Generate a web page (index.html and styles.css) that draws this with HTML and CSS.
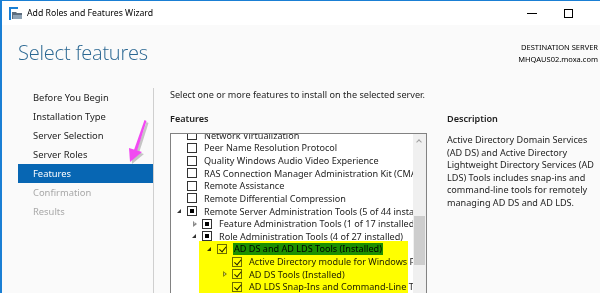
FILE: index.html
```html
<!DOCTYPE html>
<html>
<head>
<meta charset="utf-8">
<link rel="stylesheet" href="styles.css">
</head>
<body>
<div class="window">
  <div class="titlebar">
    <svg class="app-icon" width="14" height="13" viewBox="0 0 14 13">
      <rect x="0" y="0" width="2" height="13" fill="#1a7fd4"/>
      <rect x="0" y="0" width="9" height="2" fill="#1a7fd4"/>
      <path d="M3 5 h4 l1 1 h5 v6 h-10 z" fill="#5d6d7e"/>
      <path d="M4 8 h9 v4 h-9 z" fill="#8fa3b5"/>
    </svg>
    <span class="title">Add Roles and Features Wizard</span>
    <div class="controls">
      <span class="ctl"><span class="min-glyph"></span></span>
      <span class="ctl"><span class="max-glyph"></span></span>
    </div>
  </div>
  <div class="content">
    <div class="header">
      <h1 class="page-title">Select features</h1>
      <div class="dest">
        <div>DESTINATION SERVER</div>
        <div>MHQAUS02.moxa.com</div>
      </div>
    </div>
    <div class="panes">
      <nav class="nav">
        <div class="nav-item">Before You Begin</div>
        <div class="nav-item">Installation Type</div>
        <div class="nav-item">Server Selection</div>
        <div class="nav-item">Server Roles</div>
        <div class="nav-item active">Features</div>
        <div class="nav-item disabled">Confirmation</div>
        <div class="nav-item disabled">Results</div>
      </nav>
      <div class="main">
        <div class="intro">Select one or more features to install on the selected server.</div>
        <div class="cols">
          <div class="feat-col">
            <div class="label">Features</div>
            <div class="tree-box">
              <div class="tree">
                <div class="rows">
                  <div class="row l0"><span class="exp"></span><span class="cb"></span><span class="txt">Network Virtualization</span></div>
                  <div class="row l0"><span class="exp"></span><span class="cb"></span><span class="txt">Peer Name Resolution Protocol</span></div>
                  <div class="row l0"><span class="exp"></span><span class="cb"></span><span class="txt">Quality Windows Audio Video Experience</span></div>
                  <div class="row l0"><span class="exp"></span><span class="cb"></span><span class="txt">RAS Connection Manager Administration Kit (CMAK)</span></div>
                  <div class="row l0"><span class="exp"></span><span class="cb"></span><span class="txt">Remote Assistance</span></div>
                  <div class="row l0"><span class="exp"></span><span class="cb"></span><span class="txt">Remote Differential Compression</span></div>
                  <div class="row l0"><span class="exp open"></span><span class="cb partial"></span><span class="txt">Remote Server Administration Tools (5 of 44 installed)</span></div>
                  <div class="row l1"><span class="exp closed"></span><span class="cb partial"></span><span class="txt">Feature Administration Tools (1 of 17 installed)</span></div>
                  <div class="row l1"><span class="exp open"></span><span class="cb partial"></span><span class="txt">Role Administration Tools (4 of 27 installed)</span></div>
                  <div class="row l2"><span class="exp open"></span><span class="cb checked"></span><span class="txt selected">AD DS and AD LDS Tools (Installed)</span></div>
                  <div class="row l3"><span class="exp"></span><span class="cb checked"></span><span class="txt">Active Directory module for Windows PowerShell</span></div>
                  <div class="row l3"><span class="exp closed"></span><span class="cb checked"></span><span class="txt">AD DS Tools (Installed)</span></div>
                  <div class="row l3"><span class="exp"></span><span class="cb checked"></span><span class="txt">AD LDS Snap-Ins and Command-Line Tools</span></div>
                </div>
                <div class="marker"></div>
              </div>
              <div class="scrollbar">
                <div class="sb-up"></div>
                <div class="sb-thumb"></div>
              </div>
            </div>
          </div>
          <div class="desc-col">
            <div class="label">Description</div>
            <p class="desc">Active Directory Domain Services<br>(AD DS) and Active Directory<br>Lightweight Directory Services (AD<br>LDS) Tools includes snap-ins and<br>command-line tools for remotely<br>managing AD DS and AD LDS.</p>
          </div>
        </div>
      </div>
    </div>
  </div>
  <svg class="pink-arrow" width="30" height="50" viewBox="0 0 30 50">
    <g transform="translate(2,2)" fill="#9a9a9a" opacity="0.55">
      <path d="M18.5 3 L20.5 4 L11 34 L8 33 Z"/>
      <path d="M3 31 L16 35 L4 45 Z"/>
    </g>
    <g fill="#f24af2">
      <path d="M18.5 3 L20.5 4 L11 34 L8 33 Z"/>
      <path d="M3 31 L16 35 L4 45 Z"/>
    </g>
  </svg>
</div>
</body>
</html>
```

FILE: styles.css
```css
* { box-sizing: border-box; }
html, body { margin: 0; padding: 0; }
body {
  width: 600px;
  height: 293px;
  overflow: hidden;
  font-family: "Noto Sans", "Open Sans", sans-serif;
  font-size: 9.1px;
  color: #1e1e1e;
}
.window {
  position: relative;
  width: 600px;
  height: 293px;
  border-top: 1px solid #1a7fd4;
  border-left: 2px solid #1a7fd4;
  background: #fafafa;
  overflow: hidden;
  display: flex;
  flex-direction: column;
}
.titlebar {
  height: 24px;
  flex: none;
  background: #ffffff;
  display: flex;
  align-items: center;
}
.app-icon { margin-left: 7px; margin-right: 4px; margin-top: 1px; }
.title { font-size: 8.7px; color: #000; }
.controls { margin-left: auto; display: flex; margin-right: 14px; }
.ctl {
  width: 36px;
  height: 24px;
  display: flex;
  align-items: center;
  justify-content: center;
}
.min-glyph { width: 10px; height: 1px; background: #000; }
.max-glyph { width: 9px; height: 9px; border: 1px solid #000; }

.content { flex: 1; display: flex; flex-direction: column; min-height: 0; }
.header {
  height: 63px;
  flex: none;
  display: flex;
  justify-content: space-between;
  align-items: flex-start;
}
.page-title {
  margin: 15px 0 0 16px;
  font-family: "Open Sans", "Noto Sans", sans-serif;
  font-weight: 300;
  font-size: 20px;
  line-height: 26px;
  color: #2a6792;
  letter-spacing: -0.2px;
}
.dest {
  margin-top: 17px;
  margin-right: 2px;
  text-align: right;
  font-size: 7.5px;
  line-height: 11.5px;
  color: #000;
}
.panes { flex: 1; display: flex; min-height: 0; }
.nav {
  width: 152px;
  flex: none;
  padding-left: 16px;
  border-right: 1px solid #cfcfcf;
  font-size: 9.4px;
}
.nav-item {
  height: 19px;
  line-height: 19px;
  padding-left: 15px;
  white-space: nowrap;
}
.nav-item.active { background: #0766b3; color: #fff; }
.nav-item.disabled { color: #a8a8a8; }

.main { flex: 1; padding-left: 16px; display: flex; flex-direction: column; min-width: 0; }
.intro { height: 14px; line-height: 14px; white-space: nowrap; }
.cols { display: flex; gap: 20px; margin-top: 10px; flex: 1; min-height: 0; }
.label { font-weight: 600; height: 14px; line-height: 14px; }
.feat-col { width: 257px; flex: none; display: flex; flex-direction: column; }
.tree-box {
  margin-top: 7px;
  flex: 1;
  border: 1px solid #828282;
  border-bottom: none;
  background: #fff;
  display: flex;
  min-height: 0;
}
.tree { flex: 1; position: relative; overflow: hidden; min-width: 0; }
.rows { margin-top: -5px; }
.row {
  height: 12.64px;
  display: flex;
  align-items: center;
  white-space: nowrap;
  padding-left: 4px;
}
.row.l1 { padding-left: 19px; }
.row.l2 { padding-left: 34px; }
.row.l3 { padding-left: 49px; }
.exp { width: 12px; height: 12px; flex: none; position: relative; }
.exp.open::after {
  content: "";
  position: absolute;
  left: 2px; top: 4px;
  border-style: solid;
  border-width: 0 0 4px 4px;
  border-color: transparent transparent #333 transparent;
}
.exp.closed::after {
  content: "";
  position: absolute;
  left: 3px; top: 3px;
  width: 0; height: 0;
  border-style: solid;
  border-width: 3px 0 3px 4px;
  border-color: transparent transparent transparent #8a8a8a;
}
.exp.closed::before {
  content: "";
  position: absolute;
  left: 4px; top: 4.5px;
  width: 0; height: 0;
  border-style: solid;
  border-width: 1.5px 0 1.5px 1.8px;
  border-color: transparent transparent transparent #fff;
  z-index: 1;
}
.cb {
  width: 10px; height: 10px; flex: none;
  border: 1px solid #333;
  background: #fff;
  position: relative;
}
.cb.partial::after {
  content: "";
  position: absolute;
  left: 2px; top: 2px; width: 4px; height: 4px;
  background: #000;
}
.cb.checked { border-color: #6e6e6e; }
.cb.checked::after {
  content: "";
  position: absolute;
  left: 2.5px; top: 0px;
  width: 3px; height: 5.5px;
  border: solid #1e1e1e;
  border-width: 0 1.3px 1.3px 0;
  transform: rotate(40deg);
}
.txt { margin-left: 7px; }
.txt.selected { background: #1c8f1c; color: #000; padding: 0 1px; margin-left: 6px; line-height: 12px; }
.marker {
  position: absolute;
  left: 28px; top: 107px;
  width: 209px; height: 60px;
  background: #ffff00;
  mix-blend-mode: multiply;
}
.scrollbar { width: 13px; flex: none; background: #f0f0f0; position: relative; }
.sb-up {
  position: absolute; left: 4px; top: 6px;
  width: 4px; height: 4px;
  border-left: 1px solid #a0a0a0;
  border-top: 1px solid #a0a0a0;
  transform: rotate(45deg);
}
.sb-thumb {
  position: absolute; left: 1px; top: 82px;
  width: 11px; height: 49px;
  background: #cdcdcd;
}
.desc-col { flex: 1; min-width: 0; }
.desc { margin: 8px 0 0 0; line-height: 12.6px; white-space: nowrap; }
.pink-arrow { position: absolute; left: 124px; top: 116px; }
```
